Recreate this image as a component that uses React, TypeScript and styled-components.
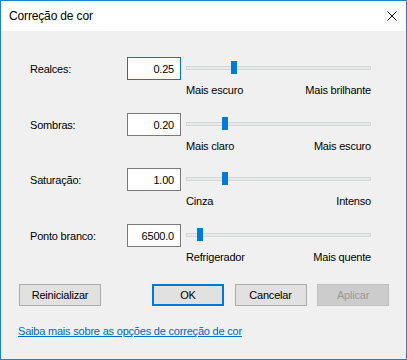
import React from "react";
import styled, { createGlobalStyle, css } from "styled-components";

const GlobalStyle = createGlobalStyle`
  html, body { margin: 0; padding: 0; background: #ffffff; }
  body {
    font-family: "Liberation Sans", Arial, sans-serif;
    font-size: 11px;
    letter-spacing: -0.2px;
    color: #000000;
  }
  * { box-sizing: border-box; }
`;

const Window = styled.div`
  width: 407px;
  height: 360px;
  border: 1px solid #1883d7;
  display: flex;
  flex-direction: column;
  background: #f0f0f0;
`;

const TitleBar = styled.div`
  height: 30px;
  flex: none;
  background: #ffffff;
  display: flex;
  align-items: center;
  padding: 0 9px 0 8px;
`;

const Title = styled.div`
  font-size: 12px;
  letter-spacing: -0.15px;
  line-height: 16px;
  flex: 1;
`;

const CloseIcon = styled.svg`
  width: 10px;
  height: 10px;
  display: block;
  margin-top: -1px;
`;

const Body = styled.div`
  flex: 1;
  display: flex;
  flex-direction: column;
  padding: 26px 17px 0 17px;
`;

const Form = styled.div`
  display: flex;
  flex-direction: column;
  gap: 15.5px;
  padding-left: 12px;
`;

const Row = styled.div`
  display: grid;
  grid-template-columns: 92px 54px 185px;
  grid-template-rows: 23px auto;
  column-gap: 5px;
`;

const Label = styled.div`
  grid-column: 1;
  grid-row: 1;
  align-self: center;
  line-height: 14px;
  padding-top: 1px;
`;

const ValueBox = styled.input<{ $focused?: boolean }>`
  grid-column: 2;
  grid-row: 1;
  width: 54px;
  height: 23px;
  margin: 0;
  border: 1px solid ${(p) => (p.$focused ? "#0078d7" : "#7a7a7a")};
  background: #ffffff;
  font: inherit;
  letter-spacing: inherit;
  color: #000000;
  text-align: right;
  padding: 1px 6px 0 2px;
  outline: none;
`;

const SliderArea = styled.div`
  grid-column: 3;
  grid-row: 1;
  display: flex;
  align-items: center;
  padding-bottom: 1px;
`;

const Track = styled.div`
  position: relative;
  width: 100%;
  height: 4px;
  background: #e7eaea;
  border: 1px solid #d6d6d6;
`;

const Thumb = styled.div<{ $offset: number }>`
  position: absolute;
  top: -6px;
  left: ${(p) => p.$offset}px;
  width: 6px;
  height: 13px;
  background: #007ad9;
`;

const Captions = styled.div`
  grid-column: 3;
  grid-row: 2;
  display: flex;
  justify-content: space-between;
  margin-top: 3px;
  line-height: 14px;
`;

const ButtonBar = styled.div`
  display: flex;
  align-items: center;
  margin-top: 20.5px;
  padding-left: 1px;
  gap: 10.5px;
`;

const Button = styled.button<{ $wide?: boolean; $default?: boolean }>`
  height: 22px;
  width: ${(p) => (p.$wide ? 82 : 72)}px;
  margin: 0;
  padding: 0;
  background: #e1e1e1;
  border: 1px solid #adadad;
  font: inherit;
  letter-spacing: inherit;
  color: #000000;
  line-height: 14px;
  ${(p) =>
    p.$default &&
    css`
      border: 2px solid #0078d7;
    `}
  &:disabled {
    background: #cccccc;
    border-color: #bfbfbf;
    color: #9a9a9a;
  }
`;

const Spacer = styled.div`
  flex: 1;
`;

const HelpLink = styled.a`
  margin-top: 18px;
  align-self: flex-start;
  color: #0066cc;
  text-decoration: underline;
  line-height: 14px;
  cursor: pointer;
`;

type Setting = {
  label: string;
  value: string;
  offset: number;
  low: string;
  high: string;
  focused?: boolean;
};

const settings: Setting[] = [
  { label: "Realces:", value: "0.25", offset: 44, low: "Mais escuro", high: "Mais brilhante", focused: true },
  { label: "Sombras:", value: "0.20", offset: 35, low: "Mais claro", high: "Mais escuro" },
  { label: "Saturação:", value: "1.00", offset: 35, low: "Cinza", high: "Intenso" },
  { label: "Ponto branco:", value: "6500.0", offset: 10, low: "Refrigerador", high: "Mais quente" },
];

export default function App() {
  return (
    <Window>
      <GlobalStyle />
      <TitleBar>
        <Title>Correção de cor</Title>
        <CloseIcon viewBox="0 0 10 10">
          <path d="M0.5 0.5 L9.5 9.5 M9.5 0.5 L0.5 9.5" stroke="#000" strokeWidth="1" fill="none" />
        </CloseIcon>
      </TitleBar>
      <Body>
        <Form>
          {settings.map((s) => (
            <Row key={s.label}>
              <Label>{s.label}</Label>
              <ValueBox $focused={s.focused} value={s.value} readOnly />
              <SliderArea>
                <Track>
                  <Thumb $offset={s.offset} />
                </Track>
              </SliderArea>
              <Captions>
                <span>{s.low}</span>
                <span>{s.high}</span>
              </Captions>
            </Row>
          ))}
        </Form>
        <ButtonBar>
          <Button $wide>Reinicializar</Button>
          <Spacer />
          <Button $default>OK</Button>
          <Button>Cancelar</Button>
          <Button disabled>Aplicar</Button>
        </ButtonBar>
        <HelpLink>Saiba mais sobre as opções de correção de cor</HelpLink>
      </Body>
    </Window>
  );
}
